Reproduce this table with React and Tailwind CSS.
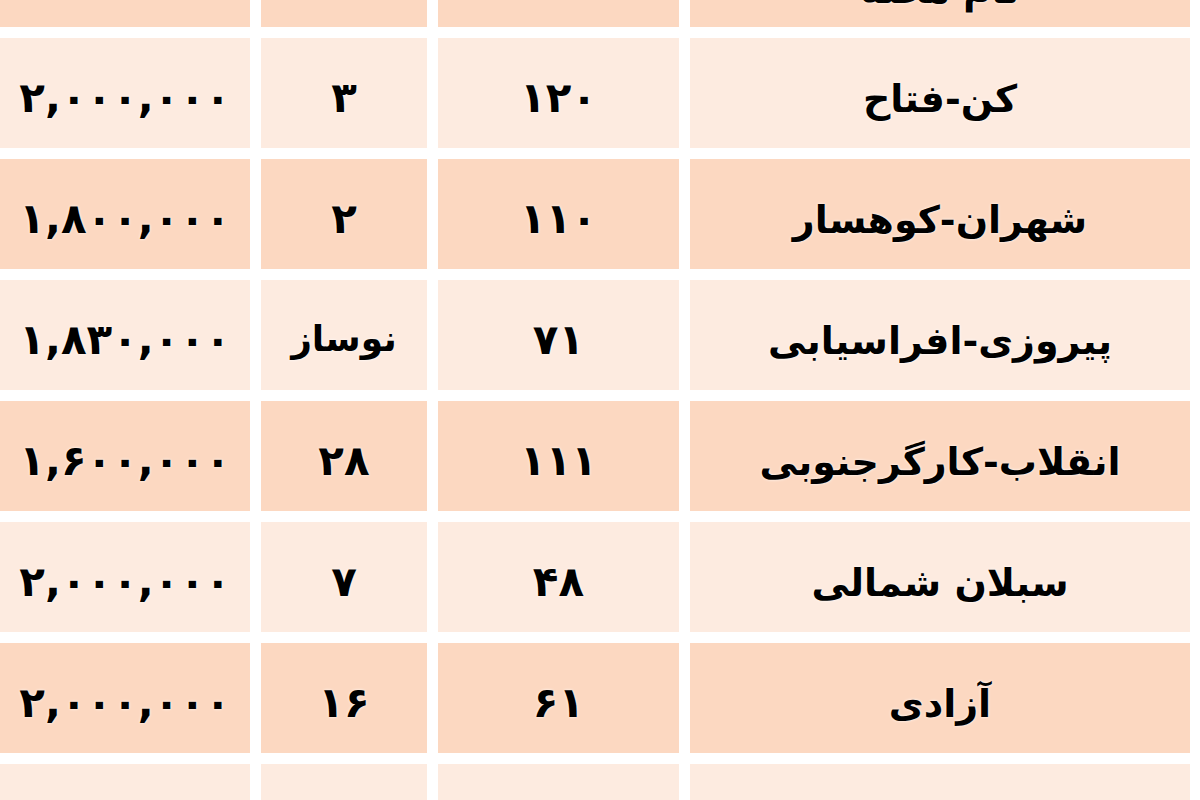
const rows = [
  { price: '۲,۰۰۰,۰۰۰', age: '۳', area: '۱۲۰', name: 'کن-فتاح', dark: false },
  { price: '۱,۸۰۰,۰۰۰', age: '۲', area: '۱۱۰', name: 'شهران-کوهسار', dark: true },
  { price: '۱,۸۳۰,۰۰۰', age: 'نوساز', area: '۷۱', name: 'پیروزی-افراسیابی', dark: false },
  { price: '۱,۶۰۰,۰۰۰', age: '۲۸', area: '۱۱۱', name: 'انقلاب-کارگرجنوبی', dark: true },
  { price: '۲,۰۰۰,۰۰۰', age: '۷', area: '۴۸', name: 'سبلان شمالی', dark: false },
  { price: '۲,۰۰۰,۰۰۰', age: '۱۶', area: '۶۱', name: 'آزادی', dark: true },
];

const Cell = ({ dark, className = '', children }) => (
  <div
    className={`flex items-center justify-center overflow-hidden ${dark ? 'bg-[#fcd8c1]' : 'bg-[#fdebe0]'} ${className}`}
  >
    {children}
  </div>
);

const Row = ({ row }) => (
  <div className="grid grid-cols-[250px_166px_241px_500px] gap-x-[11px] pr-[10px] h-[110px]">
    <Cell dark={row.dark} className="pt-[8px]">
      <span className="text-[42px] font-bold text-black [text-shadow:0_0_3px_white]">{row.price}</span>
    </Cell>
    <Cell dark={row.dark} className="pt-[8px]">
      <span className={`${row.age === 'نوساز' ? 'text-[36px]' : 'text-[42px]'} font-bold text-black [text-shadow:0_0_3px_white]`} dir="rtl">
        {row.age}
      </span>
    </Cell>
    <Cell dark={row.dark} className="pt-[8px]">
      <span className="text-[42px] font-bold text-black [text-shadow:0_0_3px_white]">{row.area}</span>
    </Cell>
    <Cell dark={row.dark} className="pt-[12px]">
      <span className="text-[38px] font-bold text-black [text-shadow:0_0_3px_white]" dir="rtl">{row.name}</span>
    </Cell>
  </div>
);

export default function App() {
  return (
    <div className="w-[1200px] h-[800px] overflow-hidden bg-white font-['DejaVu_Sans',sans-serif]">
      <div className="flex flex-col gap-[11px]">
        {/* header row, mostly cut off at the top */}
        <div className="grid grid-cols-[250px_166px_241px_500px] gap-x-[11px] pr-[10px] h-[27px]">
          <div className="bg-[#fcd8c1]" />
          <div className="bg-[#fcd8c1]" />
          <div className="bg-[#fcd8c1]" />
          <div className="bg-[#fcd8c1] flex items-end justify-center overflow-hidden">
            <span dir="rtl" className="text-[38px] font-bold leading-none translate-y-[-18px] [text-shadow:0_0_3px_white]">
              نام محله
            </span>
          </div>
        </div>
        {rows.map((r, i) => (
          <Row key={i} row={r} />
        ))}
        <div className="grid grid-cols-[250px_166px_241px_500px] gap-x-[11px] pr-[10px] h-[40px]">
          <div className="bg-[#fdebe0]" />
          <div className="bg-[#fdebe0]" />
          <div className="bg-[#fdebe0]" />
          <div className="bg-[#fdebe0]" />
        </div>
      </div>
    </div>
  );
}
